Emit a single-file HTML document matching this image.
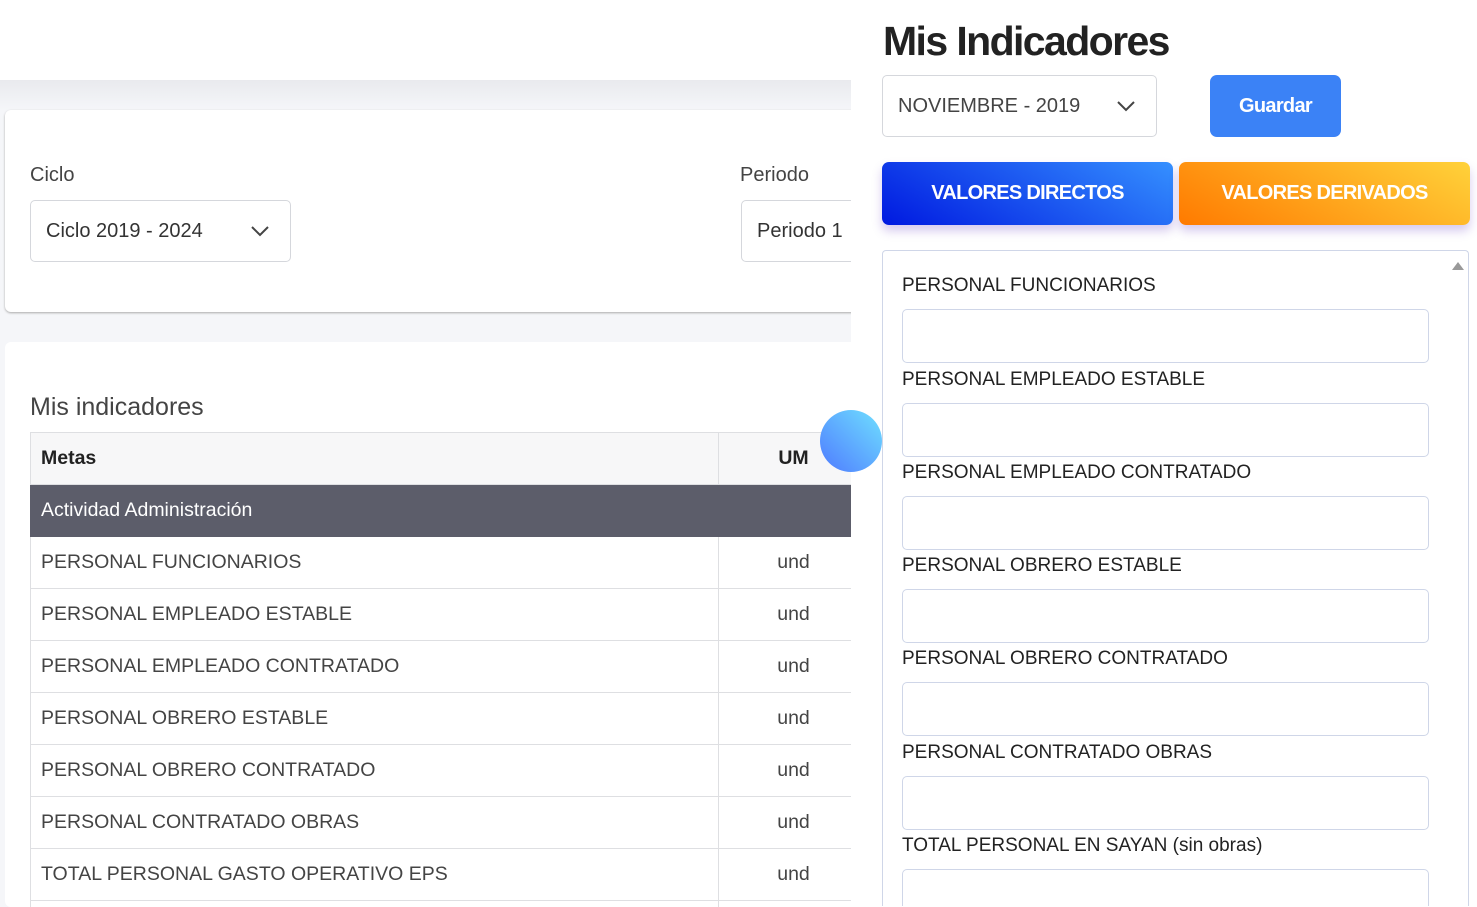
<!DOCTYPE html>
<html><head><meta charset="utf-8"><style>
*{box-sizing:border-box;margin:0;padding:0}
html,body{width:1477px;height:907px;overflow:hidden}
body{background:#fff;font-family:"Liberation Sans",sans-serif;position:relative;color:#333}
.left{position:absolute;left:0;top:80px;width:851px;height:827px;background:#f5f6f9;overflow:hidden}
.left:before{content:"";position:absolute;left:0;top:0;right:0;height:30px;background:linear-gradient(#e9eaee,#f5f6f9)}
.card{position:absolute;left:5px;width:860px;background:#fff;border-radius:6px}
.lbl{position:absolute;font-size:20px;color:#444}
.sel{position:absolute;border:1px solid #d5d7dc;border-radius:5px;height:62px;font-size:20px;color:#333;padding:19px 15px;background:#fff}
.chev{position:absolute;right:20px;top:24px}
table{position:absolute;left:25px;top:90px;border-collapse:collapse;width:838px;table-layout:fixed}
td{border:1px solid #dedfe2;height:52px;font-size:19.5px;color:#444;padding:0 10px}
td.um{text-align:center;padding:0}
.right{position:absolute;left:851px;top:0;width:626px;height:907px;background:#fff;overflow:hidden}
h1{position:absolute;left:32px;top:18px;font-size:41px;font-weight:bold;color:#222;letter-spacing:-1.6px}
.btn{position:absolute;color:#fff;font-weight:bold;font-size:20px;text-align:center;border-radius:7px;letter-spacing:-.7px}
.list{position:absolute;left:31px;top:250px;width:587px;height:656px;border:1px solid #cfd6e8;border-bottom:none;border-radius:4px 4px 0 0;overflow:hidden}
.it{position:absolute;left:19px;font-size:19px;color:#222}
.inp{position:absolute;left:19px;width:527px;height:54px;border:1px solid #cfd6e8;border-radius:5px}
</style></head><body>
<div class="left">
 <div class="card" style="top:30px;height:202px;box-shadow:0 1px 2px #aaa">
  <div class="lbl" style="left:25px;top:54px">Ciclo</div>
  <div class="sel" style="left:25px;top:90px;width:261px">Ciclo 2019 - 2024<svg class="chev" width="20" height="12" viewBox="0 0 20 12"><path d="M2 2l8 8 8-8" fill="none" stroke="#444" stroke-width="2"/></svg></div>
  <div class="lbl" style="left:735px;top:54px">Periodo</div>
  <div class="sel" style="left:736px;top:90px;width:200px">Periodo 1</div>
 </div>
 <div class="card" style="top:262px;height:565px;overflow:hidden">
  <div class="lbl" style="left:25px;top:51px;font-size:25px">Mis indicadores</div>
  <table>
   <colgroup><col style="width:688px"><col style="width:150px"></colgroup>
   <tr style="background:#f7f7f8"><td style="font-weight:bold;color:#222">Metas</td><td class="um" style="font-weight:bold;color:#222">UM</td></tr>
   <tr style="background:#5c5d6a"><td colspan="2" style="color:#fff;border-color:#5c5d6a">Actividad Administración</td></tr>
   <tr><td>PERSONAL FUNCIONARIOS</td><td class="um">und</td></tr>
   <tr><td>PERSONAL EMPLEADO ESTABLE</td><td class="um">und</td></tr>
   <tr><td>PERSONAL EMPLEADO CONTRATADO</td><td class="um">und</td></tr>
   <tr><td>PERSONAL OBRERO ESTABLE</td><td class="um">und</td></tr>
   <tr><td>PERSONAL OBRERO CONTRATADO</td><td class="um">und</td></tr>
   <tr><td>PERSONAL CONTRATADO OBRAS</td><td class="um">und</td></tr>
   <tr><td>TOTAL PERSONAL GASTO OPERATIVO EPS</td><td class="um">und</td></tr>
   <tr><td>&nbsp;</td><td class="um"></td></tr>
  </table>
 </div>
</div>
<div class="right">
 <h1>Mis Indicadores</h1>
 <div class="sel" style="left:31px;top:75px;width:275px;font-size:20px;color:#444">NOVIEMBRE - 2019<svg class="chev" width="20" height="12" viewBox="0 0 20 12"><path d="M2 2l8 8 8-8" fill="none" stroke="#444" stroke-width="2"/></svg></div>
 <div class="btn" style="left:359px;top:75px;width:131px;height:62px;line-height:62px;background:#3b82f6">Guardar</div>
 <div class="btn" style="left:31px;top:162px;width:291px;height:63px;line-height:63px;background:linear-gradient(30deg,#0019e0,#3590ff);box-shadow:0 6px 10px rgba(120,80,200,.3)">VALORES DIRECTOS</div>
 <div class="btn" style="left:328px;top:162px;width:291px;height:63px;line-height:63px;background:linear-gradient(30deg,#ff7a00,#ffd23a);box-shadow:0 6px 10px rgba(120,80,200,.3)">VALORES DERIVADOS</div>
 <div class="list">
  <svg style="position:absolute;right:4px;top:10px" width="12" height="10"><path d="M0 9L6 1 12 9z" fill="#999"/></svg>
  <div class="it" style="top:24px">PERSONAL FUNCIONARIOS</div><div class="inp" style="top:58px"></div>
  <div class="it" style="top:118px">PERSONAL EMPLEADO ESTABLE</div><div class="inp" style="top:152px"></div>
  <div class="it" style="top:211px">PERSONAL EMPLEADO CONTRATADO</div><div class="inp" style="top:245px"></div>
  <div class="it" style="top:304px">PERSONAL OBRERO ESTABLE</div><div class="inp" style="top:338px"></div>
  <div class="it" style="top:397px">PERSONAL OBRERO CONTRATADO</div><div class="inp" style="top:431px"></div>
  <div class="it" style="top:491px">PERSONAL CONTRATADO OBRAS</div><div class="inp" style="top:525px"></div>
  <div class="it" style="top:584px">TOTAL PERSONAL EN SAYAN (sin obras)</div><div class="inp" style="top:618px"></div>
 </div>
</div>
<div style="position:absolute;left:820px;top:410px;width:62px;height:62px;border-radius:50%;background:linear-gradient(45deg,#4f7bff,#6fe0ff)"></div>
</body></html>
